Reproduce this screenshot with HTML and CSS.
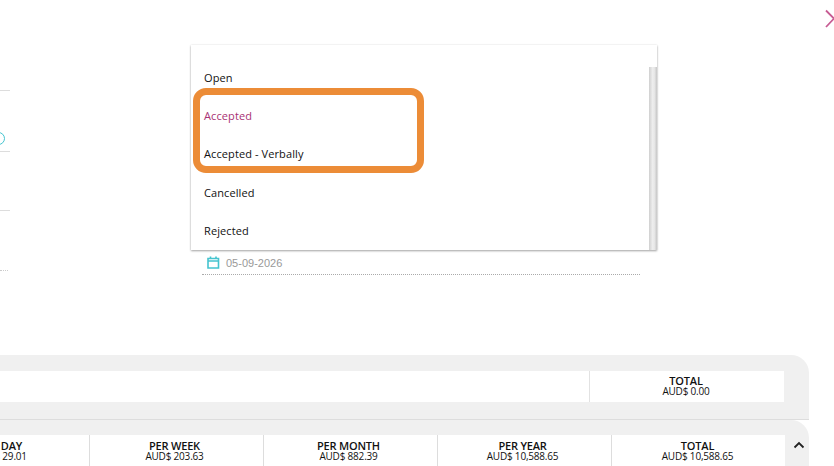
FILE: index.html
```html
<!DOCTYPE html>
<html lang="en">
<head>
    <meta charset="UTF-8">
    <meta name="viewport" content="width=device-width, initial-scale=1.0">
    <title>Quote status</title>
    <link rel="stylesheet" href="styles.css">
</head>
<body>

<div class="page">
    <svg class="close-icon" width="10" height="20" viewBox="0 0 10 20">
        <path d="M1 1.500 L9 9.500 L1 18" fill="none" stroke="#c75b93" stroke-width="1.800"/>
    </svg>

    <div class="form">
        <div class="left-col">
            <div class="left-row row-one"></div>
            <div class="left-row row-two"><span class="info-circle"></span></div>
            <div class="left-row row-three"></div>
            <div class="left-row row-four"></div>
        </div>
        <div class="right-col">
            <div class="date-field">
                <svg width="13" height="14" viewBox="0 0 13 14">
                    <path d="M1 2.500h10.500v9.500h-10.500z M1 5h10.500 M3.500 0.500v2 M9 0.500v2" fill="none" stroke="#45c4cf" stroke-width="1.600"/>
                </svg>
                <span>05-09-2026</span>
            </div>
        </div>
    </div>

    <div class="dropdown">
        <ul class="dropdown-list">
            <li>Open</li>
            <li class="selected">Accepted</li>
            <li>Accepted - Verbally</li>
            <li>Cancelled</li>
            <li>Rejected</li>
        </ul>
        <div class="scrollbar"><div class="scroll-thumb"></div></div>
    </div>
    <div class="highlight"></div>

    <div class="panel panel-top">
        <div class="totals">
            <div class="totals-empty"></div>
            <div class="cell cell-total">
                <strong>TOTAL</strong>
                <span>AUD$ 0.00</span>
            </div>
        </div>
    </div>

    <div class="panel panel-bottom">
        <div class="rates">
            <div class="cell"><strong>PER DAY</strong><span>AUD$ 29.01</span></div>
            <div class="cell"><strong>PER WEEK</strong><span>AUD$ 203.63</span></div>
            <div class="cell"><strong>PER MONTH</strong><span>AUD$ 882.39</span></div>
            <div class="cell"><strong>PER YEAR</strong><span>AUD$ 10,588.65</span></div>
            <div class="cell"><strong>TOTAL</strong><span>AUD$ 10,588.65</span></div>
        </div>
        <svg class="collapse-icon" width="12" height="8" viewBox="0 0 12 8">
            <path d="M1.500 6.500 L6 2 L10.500 6.500" fill="none" stroke="#222" stroke-width="1.800"/>
        </svg>
    </div>
</div>

</body>
</html>
```

FILE: styles.css
```css
html, body {
    margin: 0;
    padding: 0;
    background: #fff;
}

body {
    font-family: "Open Sans", Arial, sans-serif;
    color: #111;
}

.page {
    position: relative;
    width: 834px;
    height: 466px;
    overflow: hidden;
}

.close-icon {
    position: absolute;
    top: 9px;
    left: 825px;
}

.form {
    display: flex;
    height: 355px;
}

.left-col {
    width: 10px;
    overflow: hidden;
}

.left-row {
    display: flex;
    justify-content: flex-end;
    align-items: flex-end;
    box-sizing: border-box;
    border-bottom: 1px solid #ddd;
}

.row-one { height: 91px; }

.row-two {
    height: 61px;
    padding-bottom: 6px;
}

.row-three { height: 59px; }

.row-four {
    height: 60px;
    width: 8px;
    border-bottom: 1px dotted #ccc;
}

.info-circle {
    flex: none;
    width: 11px;
    height: 11px;
    margin-right: 5px;
    border: 1px solid #45c4cf;
    border-radius: 50%;
}

.right-col {
    margin-left: 192px;
    padding-top: 255px;
}

.date-field {
    display: flex;
    align-items: center;
    gap: 6px;
    box-sizing: border-box;
    width: 438px;
    height: 20px;
    padding: 0 0 4px 5px;
    border-bottom: 1px dotted #aaa;
    font-family: "Liberation Sans", Arial, sans-serif;
    font-size: 11px;
    color: #999;
}

.dropdown {
    position: absolute;
    top: 45px;
    left: 191px;
    display: flex;
    width: 466px;
    height: 205px;
    background: #fff;
    box-shadow: 0 1px 2px rgba(0, 0, 0, 0.35), 0 0 2px rgba(0, 0, 0, 0.08);
}

.dropdown-list {
    flex: 1;
    margin: 0;
    padding: 13.800px 0 0;
    list-style: none;
    font-size: 11px;
    letter-spacing: 0.1px;
}

.dropdown-list li {
    height: 38.250px;
    padding-left: 13px;
    line-height: 38px;
}

.dropdown-list .selected {
    color: #a93274;
}

.scrollbar {
    width: 8px;
    padding-top: 22px;
}

.scroll-thumb {
    height: 183px;
    background: linear-gradient(to right, #cfcfcf, #eeeeee 45%, #e6e6e6 70%, #c6c6c6);
}

.highlight {
    position: absolute;
    top: 88px;
    left: 193px;
    width: 217px;
    height: 71px;
    border: 7px solid #ec8c37;
    border-radius: 13px;
}

.panel {
    display: flex;
    background: #f0f0f0;
    width: 809px;
    border-top-right-radius: 18px;
}

.panel-top {
    box-sizing: border-box;
    height: 65px;
    padding: 16px 25px 17px 0;
    border-bottom: 1px solid #ddd;
}

.panel-bottom {
    position: relative;
    height: 46px;
    padding-top: 15px;
    box-sizing: border-box;
    overflow: hidden;
}

.totals {
    flex: 1;
    display: flex;
    background: #fff;
}

.totals-empty {
    flex: 1;
}

.cell {
    display: flex;
    flex-direction: column;
    align-items: center;
    box-sizing: border-box;
    padding-top: 4px;
    font-size: 10px;
    line-height: 11px;
    letter-spacing: -0.2px;
    white-space: nowrap;
}

.cell strong {
    font-size: 11px;
    font-weight: 600;
}

.cell-total {
    width: 195px;
    padding-right: 2px;
    border-left: 1px solid #e2e2e2;
}

.rates {
    display: grid;
    grid-template-columns: repeat(4, 174px) 173px;
    margin-left: -84px;
    height: 40px;
    background: #fff;
}

.rates .cell {
    padding: 5px 4px 0 0;
    border-right: 1px solid #ddd;
}

.rates .cell:last-child {
    padding-right: 2px;
    border-right: none;
}

.collapse-icon {
    position: absolute;
    top: 21px;
    left: 793px;
}
```
